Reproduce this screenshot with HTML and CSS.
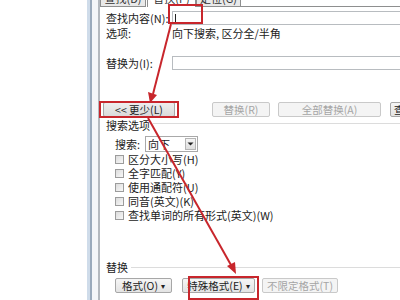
FILE: index.html
```html
<!DOCTYPE html>
<html>
<head>
<meta charset="utf-8">
<link rel="stylesheet" href="styles.css">
</head>
<body>
<div class="screen">
  <div class="desk"></div>
  <div class="frame"><div class="f1"></div><div class="f2"></div><div class="f3"></div><div class="f4"></div></div>
  <div class="dlg">
    <div class="tabs">
      <div class="tab t1"><span>查找(D)</span></div>
      <div class="tab on t2"><span>替换(P)</span></div>
      <div class="tab t3"><span>定位(G)</span></div>
      <div class="tabfill"></div>
    </div>
    <div class="row r1"><span class="lbl">查找内容(N):</span><div class="input"><i class="caret"></i></div></div>
    <div class="row r2"><span class="lbl">选项:</span><span>向下搜索, 区分全/半角</span></div>
    <div class="row r3"><span class="lbl">替换为(I):</span><div class="input"></div></div>
    <div class="btnrow">
      <div class="btn less">&lt;&lt; 更少(L)</div>
      <div class="btn dis rep">替换(R)</div>
      <div class="btn dis all">全部替换(A)</div>
      <div class="btn nxt">查找下一处(F)</div>
    </div>
    <div class="group g1"><span>搜索选项</span><i class="gl"></i></div>
    <div class="opts">
      <div class="srow"><span class="slbl">搜索:</span><div class="select"><span>向下</span><i class="dd"><svg width="9" height="6" viewBox="0 0 9 6"><path d="M1.5 1.5h6l-3 3z" fill="#222"/></svg></i></div></div>
      <div class="chk"><i class="box"></i><span>区分大小写(H)</span></div>
      <div class="chk"><i class="box"></i><span>全字匹配(Y)</span></div>
      <div class="chk"><i class="box"></i><span>使用通配符(U)</span></div>
      <div class="chk"><i class="box"></i><span>同音(英文)(K)</span></div>
      <div class="chk"><i class="box"></i><span>查找单词的所有形式(英文)(W)</span></div>
    </div>
    <div class="group g2"><span>替换</span><i class="gl"></i></div>
    <div class="btnrow2">
      <div class="btn fmt">格式(O) <b>▾</b></div>
      <div class="btn spec">特殊格式(E) <b>▾</b></div>
      <div class="btn dis nolim">不限定格式(T)</div>
    </div>
  </div>
  <div class="mark m1"></div>
  <div class="mark m2"></div>
  <div class="mark m3"></div>
  <svg class="arrows" width="400" height="300" viewBox="0 0 400 300">
    <line x1="171" y1="24" x2="153" y2="94" stroke="#c8262c" stroke-width="2"/>
    <polygon points="150,103 148,92 157,95" fill="#c8262c"/>
    <line x1="148" y1="118" x2="231" y2="265" stroke="#c8262c" stroke-width="2"/>
    <polygon points="236,274 227,266 235,262" fill="#c8262c"/>
  </svg>
</div>
</body>
</html>
```
FILE: styles.css
```css
* { box-sizing: border-box; }
html, body { margin: 0; padding: 0; background: #fff; }
body { font-family: "Noto Sans CJK SC", "Noto Sans", sans-serif; font-size: 11px; color: #222; }
.screen { position: relative; width: 400px; height: 300px; overflow: hidden; display: flex; background: #fff; }
.desk { width: 87px; flex: none; background: #fff; }
.frame { width: 13px; flex: none; display: flex; }
.f1 { width: 3px; background: #cfdcea; }
.f2 { width: 2px; background: #9aaabb; }
.f3 { width: 6px; background: #f4f6f8; }
.f4 { width: 2px; background: #b4b9be; }
.dlg { flex: 1; display: flex; flex-direction: column; background: #fff; }
.tabs { height: 7px; display: flex; overflow: hidden; }
.tab { height: 7px; border: 1px solid #8e8f8f; border-top: none; background: #e9e9e9; position: relative; overflow: hidden; }
.tab span { position: absolute; left: 0; right: 0; top: -8px; text-align: center; line-height: 12px; color: #333; }
.t1 { width: 46px; }
.t2 { width: 49px; background: #fff; border-bottom: none; height: 7px; margin-left: 1px; }
.t3 { width: 45px; }
.tabfill { flex: 1; border-bottom: 1px solid #8e8f8f; }
.row { display: flex; align-items: center; padding-left: 6px; }
.lbl { width: 66px; flex: none; }
.r1 { margin-top: 4px; height: 14px; }
.r2 { margin-top: 2px; height: 12px; }
.r3 { margin-top: 17px; height: 14px; }
.input { flex: 1; height: 14px; border: 1px solid #b8bcc0; border-right: none; background: #fff; position: relative; }
.caret { position: absolute; left: 2px; top: 2px; width: 1px; height: 9px; background: #222; }
.btn { height: 15px; border: 1px solid #a7a7a7; border-radius: 2px; background: linear-gradient(#f6f6f6, #e3e3e3); display: flex; align-items: center; justify-content: center; font-size: 10.5px; color: #222; white-space: nowrap; flex: none; }
.btn.dis { color: #a5a5a5; border-color: #c9c9c9; background: #f4f4f4; }
.btn b { font-weight: normal; font-size: 8px; margin-left: 3px; }
.btnrow { display: flex; margin-top: 32px; padding-left: 3px; }
.less { width: 72px; background: linear-gradient(#eeeeee, #dadada); }
.rep { width: 58px; margin-left: 37px; }
.all { width: 103px; margin-left: 8px; }
.nxt { width: 60px; margin-left: 9px; justify-content: flex-start; padding-left: 3px; }
.group { display: flex; align-items: center; height: 12px; padding-left: 6px; }
.g1 { margin-top: 2px; }
.g2 { margin-top: 39px; }
.gl { flex: 1; height: 1px; background: #dcdcdc; margin-left: 3px; }
.g1 .gl { margin-top: -3px; }
.opts { padding-left: 15px; }
.srow { display: flex; align-items: center; margin-top: 5px; height: 16px; }
.slbl { width: 30px; }
.select { width: 53px; height: 16px; border: 1px solid #a9a9a9; display: flex; align-items: center; padding-left: 2px; justify-content: space-between; }
.dd { width: 11px; height: 12px; border: 1px solid #b5b5b5; background: linear-gradient(#f5f5f5, #dedede); margin-right: 1px; display: flex; align-items: center; justify-content: center; }
.dd svg { display: block; }
.chk { display: flex; align-items: center; height: 14px; }
.chk:first-of-type { margin-top: 1px; }
.box { width: 9px; height: 9px; border: 1px solid #9c9c9c; background: linear-gradient(135deg, #dcdcdc, #f8f8f8); margin-right: 4px; flex: none; }
.btnrow2 { display: flex; margin-top: 5px; padding-left: 15px; }
.fmt { width: 57px; }
.spec { width: 73px; margin-left: 10px; }
.nolim { width: 76px; margin-left: 7px; }
.mark { position: absolute; border: 2px solid #c8262c; }
.m1 { left: 168px; top: 4px; width: 35px; height: 20px; }
.m2 { left: 99px; top: 101px; width: 80px; height: 17px; }
.m3 { left: 188px; top: 276px; width: 71px; height: 24px; }
.arrows { position: absolute; left: 0; top: 0; pointer-events: none; }
```
